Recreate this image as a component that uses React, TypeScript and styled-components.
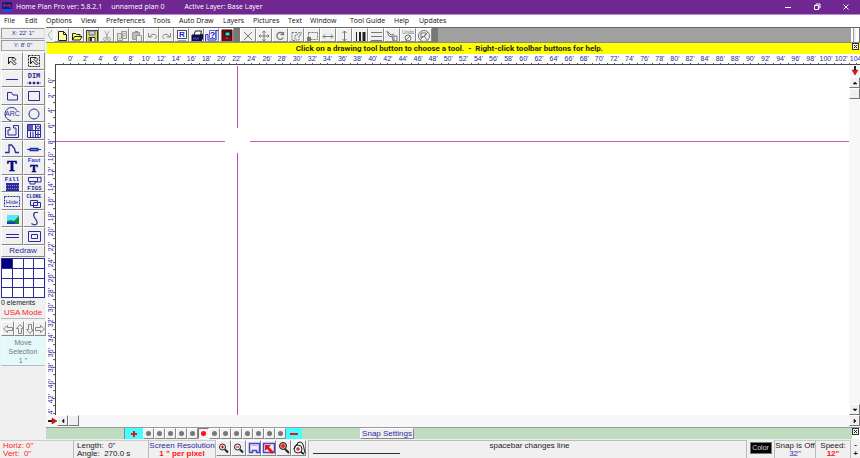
import React from "react";
import styled, { createGlobalStyle, css } from "styled-components";

const NAVY = "#2a2a9c";
const UI = `"Open Sans", "Noto Sans", sans-serif`;
const ARIAL = `"Liberation Sans", Arial, sans-serif`;

const GlobalStyle = createGlobalStyle`
  *, *::before, *::after { box-sizing: border-box; }
  html, body, #root { height: 100%; margin: 0; }
  body { font-family: ${ARIAL}; font-size: 8px; color: #222; background: #f0f0f0; overflow: hidden; }
  button { font: inherit; color: inherit; margin: 0; padding: 0; border: 0; background: none; }
  svg { display: block; flex: none; }
`;

const raised = css`
  background: #f0f0f0;
  border: 1px solid;
  border-color: #fff #888 #888 #fff;
`;

const sunken = css`
  border: 1px solid;
  border-color: #a4a4a4 #fff #fff #a4a4a4;
`;

const Window = styled.div`
  display: flex;
  flex-direction: column;
  height: 100vh;
`;

const TitleBar = styled.header`
  display: flex;
  align-items: center;
  height: 15px;
  flex: none;
  padding-left: 2px;
  background: #6f2791;
  border-bottom: 1px solid #b98bd0;
  color: #fff;
  font: 7px/12px ${UI};
`;

const TitleText = styled.span<{ $gap?: number }>`
  margin-left: ${(p) => p.$gap ?? 4}px;
  white-space: nowrap;
`;

const WindowControls = styled.div`
  display: flex;
  margin-left: auto;
`;

const WindowButton = styled.button`
  display: grid;
  place-items: center;
  width: 29px;
  height: 14px;
  color: #fff;
`;

const MenuBar = styled.nav`
  display: flex;
  align-items: center;
  height: 12px;
  flex: none;
  padding-left: 4px;
  background: #fff;
  color: #111;
  font: 7px/12px ${UI};
`;

const MenuItem = styled.button<{ $w: number }>`
  width: ${(p) => p.$w}px;
  text-align: left;
  white-space: nowrap;
`;

const Body = styled.div`
  display: flex;
  flex: 1;
  min-height: 0;
`;

const Sidebar = styled.aside`
  display: flex;
  flex-direction: column;
  width: 46px;
  flex: none;
  padding: 1px 1px 0;
`;

const Coordinate = styled.output`
  ${sunken}
  height: 11px;
  margin-bottom: 1px;
  color: ${NAVY};
  font-size: 6px;
  line-height: 9px;
  text-align: center;
  background: #eee;
  border-color: #999 #ddd #aaa #999;
`;

const ToolGrid = styled.div`
  display: grid;
  grid-template-columns: 1fr 1fr;
  grid-template-rows: repeat(11, 1fr);
  height: 193px;
  flex: none;
`;

const ToolButton = styled.button`
  ${raised}
  display: grid;
  place-items: center;
  min-height: 0;
  color: ${NAVY};
`;

const RedrawButton = styled.button`
  ${raised}
  height: 12px;
  flex: none;
  color: ${NAVY};
  font-size: 8px;
  line-height: 10px;
`;

const PatternGrid = styled.div`
  display: grid;
  grid-template-columns: repeat(4, 1fr);
  gap: 1px;
  height: 40px;
  flex: none;
  margin-top: 1px;
  padding: 1px;
  background: ${NAVY};
`;

const PatternCell = styled.button<{ $on: boolean }>`
  background: ${(p) => (p.$on ? "#00007c" : "#fff")};
`;

const ElementCount = styled.div`
  font-size: 7px;
  line-height: 10px;
  white-space: nowrap;
`;

const Mode = styled.button`
  height: 11px;
  color: #f22;
  line-height: 10px;
  border-bottom: 1px solid #bbb;
  white-space: nowrap;
`;

const MovePad = styled.div`
  display: grid;
  grid-template-columns: 13px 10px 10px 1fr;
  height: 15px;
  margin-top: 2px;
`;

const MoveButton = styled.button`
  ${raised}
  display: grid;
  place-items: center;
  color: #888;
`;

const MoveInfo = styled.div`
  height: 30px;
  padding-top: 2px;
  background: #e4fafa;
  border-bottom: 1px solid #bbb;
  color: #777;
  font-size: 7px;
  line-height: 9px;
  text-align: center;
`;

const Main = styled.main`
  display: flex;
  flex-direction: column;
  flex: 1;
  min-width: 0;
`;

const Toolbar = styled.div`
  display: flex;
  height: 16px;
  flex: none;
  background: #a0a0a0;
  border-top: 1px solid #666;
  border-bottom: 1px solid #888;
`;

const ToolbarGroup = styled.div`
  display: flex;
`;

const BarButton = styled.button<{ $wide?: boolean }>`
  ${raised}
  display: grid;
  place-items: center;
  width: ${(p) => (p.$wide ? 16 : 15)}px;
  overflow: hidden;
  color: #777;
`;

const BackButton = styled(BarButton)`
  width: 8px;
  border-color: #f0f0f0;
`;

const Divider = styled.div`
  width: 6px;
  background: #777;
`;

const BarEnd = styled.div`
  width: 9px;
  margin-left: auto;
  padding: 0 2px;
  background: #fff;
  border-right: 1px solid #777;

  &::before {
    content: "";
    display: block;
    width: 3px;
    height: 100%;
    border-left: 1px solid #999;
    background: #eee;
  }
`;

const HintBar = styled.div`
  display: flex;
  height: 11px;
  flex: none;
  background: #ff0;
  border-left: 1px solid #f0f0f0;
  color: #222;
`;

const HintText = styled.p`
  flex: 1;
  margin: 0;
  font-family: Roboto, ${ARIAL};
  font-weight: bold;
  line-height: 12px;
  text-align: center;
  white-space: pre;
`;

const CloseBox = styled.button`
  display: grid;
  place-items: center;
  width: 7px;
  height: 7px;
  margin-right: 1px;
  background: #f0f0f0;
  border: 1px solid #333;
`;

const TopRuler = styled.div`
  display: flex;
  height: 11px;
  flex: none;
  padding-left: 17px;
  overflow: hidden;
  background: linear-gradient(#444, #444) 9px 100% / 100% 1px no-repeat #fff;
`;

const TopScale = styled.div`
  display: flex;
  flex: 1;
  margin-right: -4px;
`;

const LeftRuler = styled.div`
  display: flex;
  flex-direction: column;
  width: 10px;
  flex: none;
  padding-top: 8px;
  overflow: hidden;
  background: #fff;
  border-right: 1px solid #444;
`;

const LeftScale = styled.div`
  display: flex;
  flex-direction: column;
  flex: 1;
  min-height: 0;
  margin-bottom: -6px;
`;

const tick = "linear-gradient(#555, #555)";

const TopMark = styled.span`
  display: flex;
  justify-content: center;
  flex: 1 1 0;
  width: 0;
  color: ${NAVY};
  font-size: 7px;
  line-height: 9px;
  white-space: nowrap;
  background: ${tick} 0 9px / 1px 2px no-repeat, ${tick} 50% 9px / 1px 2px no-repeat;
`;

const LeftMark = styled.span`
  display: flex;
  justify-content: center;
  flex: 1 1 0;
  min-height: 0;
  height: 0;
  color: ${NAVY};
  font-size: 7px;
  line-height: 9px;
  white-space: nowrap;
  writing-mode: vertical-rl;
  transform: rotate(180deg);
  background: ${tick} 0 0 / 2px 1px no-repeat, ${tick} 0 50% / 2px 1px no-repeat;
`;

const Workspace = styled.div`
  display: flex;
  flex: 1;
  min-height: 0;
`;

const Canvas = styled.div`
  position: relative;
  flex: 1;
  overflow: hidden;
  background: #fff;
`;

const HairH = styled.i<{ $from: number; $to?: number }>`
  position: absolute;
  top: 76px;
  left: ${(p) => p.$from}px;
  ${(p) => (p.$to === undefined ? "right: 0;" : `width: ${p.$to - p.$from}px;`)}
  height: 1px;
  background: #c85cc4;
`;

const HairV = styled.i<{ $from: number; $to?: number }>`
  position: absolute;
  left: 181px;
  top: ${(p) => p.$from}px;
  ${(p) => (p.$to === undefined ? "bottom: 0;" : `height: ${p.$to - p.$from}px;`)}
  width: 1px;
  background: #c04cc0;
`;

const VScroll = styled.div`
  display: flex;
  flex-direction: column;
  width: 11px;
  flex: none;
  background: #f7f7f7;
`;

const HScroll = styled.div`
  display: flex;
  height: 12px;
  flex: none;
  background: #f7f7f7;
`;

const ScrollButton = styled.button`
  ${raised}
  display: grid;
  place-items: center;
  width: 11px;
  height: 11px;
  flex: none;
  border-color: #fff #777 #777 #fff;
`;

const ScrollEnd = styled(ScrollButton)<{ $push?: boolean }>`
  margin: ${(p) => (p.$push ? "auto 0 0 0" : "0")};
`;

const ScrollSpace = styled.div`
  flex: 1;
`;

const RulerMarker = styled.div`
  display: grid;
  place-items: center;
  width: 11px;
  height: 12px;
  flex: none;
`;

const LayerBar = styled.div`
  display: flex;
  height: 12px;
  flex: none;
  background: #c0dcc0;
  border-top: 1px solid #999;
`;

const LayerStep = styled.button<{ $w: number }>`
  display: grid;
  place-items: center;
  width: ${(p) => p.$w}px;
  background: #4ff;
`;

const LayerStart = styled.div`
  width: 79px;
  border-right: 1px solid #888;
`;

const LayerDot = styled.button<{ $on: boolean }>`
  ${raised}
  display: grid;
  place-items: center;
  width: 11px;
  ${(p) => p.$on && "border-color: #777 #fff #fff #777;"}

  &::before {
    content: "";
    width: 5px;
    height: 5px;
    border-radius: 50%;
    background: ${(p) => (p.$on ? "#f11" : "#777")};
  }
`;

const SnapSettings = styled.button`
  ${raised}
  width: 54px;
  margin-left: 58px;
  color: ${NAVY};
  line-height: 9px;
  white-space: nowrap;
`;

const LayerEnd = styled.div`
  width: 8px;
  margin-left: auto;
  background: #fff;
`;

const StatusBar = styled.footer`
  display: flex;
  height: 19px;
  flex: none;
  padding-top: 1px;
  background: #f0f0f0;
  line-height: 8px;
  white-space: pre;
`;

const StatusCell = styled.div<{ $w: number; $color?: string; $center?: boolean; $pad?: number }>`
  width: ${(p) => p.$w}px;
  padding: 1px 0 0 ${(p) => p.$pad ?? 0}px;
  color: ${(p) => p.$color ?? "#222"};
  text-align: ${(p) => (p.$center ? "center" : "left")};
  border-right: 1px solid #bbb;
  border-top: 1px solid #ccc;
  overflow: hidden;
`;

const Line = styled.div<{ $color?: string; $bold?: boolean }>`
  color: ${(p) => p.$color ?? "inherit"};
  font-weight: ${(p) => (p.$bold ? "bold" : "normal")};
`;

const ZoomButton = styled.button`
  ${raised}
  display: grid;
  place-items: center;
  width: 15px;
  height: 16px;
`;

const LineSample = styled.div`
  display: grid;
  align-content: start;
  flex: 1;
  margin-left: 2px;
  padding: 1px 0 0 4px;
  border: solid #bbb;
  border-width: 1px 1px 0 1px;
  text-align: center;

  &::after {
    content: "";
    width: 87px;
    height: 1px;
    margin-top: 3px;
    background: #333;
  }
`;

const ColorCell = styled.div`
  display: grid;
  align-content: start;
  justify-content: center;
  width: 28px;
  padding-top: 2px;
  border-right: 1px solid #bbb;
`;

const ColorButton = styled.button`
  width: 22px;
  height: 12px;
  background: #000;
  border: 1px solid #777;
  color: #ddd;
  font-size: 7px;
`;

const SpeedSteps = styled.div`
  display: flex;
  flex-direction: column;
  width: 9px;
`;

const StepButton = styled.button`
  height: 9px;
  font-weight: bold;
`;

type IconProps = { w?: number; h?: number; sw?: number; children: React.ReactNode };

const Svg = ({ w = 14, h = 14, sw = 1, children }: IconProps) => (
  <svg width={w} height={h} viewBox={`0 0 ${w} ${h}`} fill="none" stroke="currentColor" strokeWidth={sw} aria-hidden>
    {children}
  </svg>
);

const Side = ({ children }: { children: React.ReactNode }) => (
  <Svg w={20} h={16}>{children}</Svg>
);

const glyph = { fill: "currentColor", stroke: "none", textAnchor: "middle" as const };
const pixelFont = `"Liberation Mono", monospace`;

const cursor = (
  <path d="M6.5 11V4.500h5.500l-2 2 4 4-1.500 1.500-4-4zM12 4.500l2 2-1.500 1" stroke="#222" />
);

const sideTools: [string, React.ReactNode][] = [
  ["Select", <Side>{cursor}</Side>],
  ["Select area", <Side>{cursor}<path d="M4.500 2.500h11v11h-11z" stroke="#222" strokeDasharray="2 1" /></Side>],
  ["Line", <Side><path d="M4 8.500h12" /></Side>],
  ["Dimension", <Side><text x="10" y="7" fontSize="7" fontWeight="bold" fontFamily={pixelFont} {...glyph}>DIM</text><path d="M3 12h14" strokeWidth=".6" /><path d="M5 12h2M9 12h2M13 12h2" strokeWidth="2.500" /></Side>],
  ["Polygon", <Side><path d="M5.500 4.500h4l1.500 2.500h4.500v5h-10z" /></Side>],
  ["Rectangle", <Side><path d="M4.500 3.500h11v9h-11z" /></Side>],
  ["Arc", <Side><path d="M15 4.500A6.500 6.500 0 1 0 9 14.500" /><text x="10.500" y="10" fontSize="7" fontFamily={ARIAL} {...glyph}>ARC</text></Side>],
  ["Circle", <Side><circle cx="10" cy="8" r="5" /></Side>],
  ["Walls", <Side><path d="M3.500 4.500v10h13v-12h-5v2.500h2.500v7h-8v-5h2v-2.500z" /></Side>],
  ["Windows and doors", <Side><path d="M3.500 1.500h13v13h-13zM3.500 7.500h13M11.500 1.500v13M6.500 8.500v6M9 8.500v6M14 8.500v6M12 11.500h5" /><path d="M4 2h5v5h-5z" fill="currentColor" fillOpacity=".75" stroke="none" /><circle cx="14" cy="4.500" r="1.500" /></Side>],
  ["Curve", <Side><path d="M3 11.500h4v-7.500h2.500l3 3.500 1 4h3.500" strokeWidth="1.300" /></Side>],
  ["Beam", <Side><path d="M3 8.500h14" /><path d="M5.500 8.500h9" strokeWidth="3.500" /><path d="M7 8.500h6" stroke="#1d9fd0" /></Side>],
  ["Text", <Side><text x="10" y="13" fontSize="14" fontWeight="bold" fontFamily={`"Liberation Serif", serif`} {...glyph} fill="#000080" stroke="#000080" strokeWidth=".6">T</text></Side>],
  ["Fast text", <Side><text x="10" y="4" fontSize="6" fontWeight="bold" fontFamily={ARIAL} {...glyph} fill="#3838e0">Fast</text><text x="10" y="14" fontSize="11" fontWeight="bold" fontFamily={`"Liberation Serif", serif`} {...glyph} fill="#000080" stroke="#000080" strokeWidth=".6">T</text></Side>],
  ["Fill", <Side><text x="10" y="5" fontSize="6" fontWeight="bold" fontFamily={pixelFont} {...glyph}>Fill</text><path d="M4 7h13v8h-13z" fill="currentColor" stroke="none" /><path d="M4 9.500h13M4 12.500h13" stroke="#8d8dde" strokeDasharray="1 1" /></Side>],
  ["Figures", <Side><path d="M4.500 1.500h9v4h-9zM13.500 2l3.500-1v5h-6v2h-5v-2" /><text x="10.500" y="14" fontSize="6" fontWeight="bold" fontFamily={pixelFont} {...glyph}>FIGS</text></Side>],
  ["Hide", <Side><path d="M2.500 3.500h15v10h-15z" strokeDasharray="2 1" /><text x="10" y="11" fontSize="6" fontFamily={ARIAL} {...glyph}>Hide</text></Side>],
  ["Clone", <Side><text x="10" y="5" fontSize="5" fontWeight="bold" fontFamily={pixelFont} {...glyph}>CLONE</text><path d="M6.500 7.500h7v5h-7zM9.500 9.500h7v5h-7z" /></Side>],
  ["Picture", <Side><path d="M5 4h12v9h-12z" fill="#55e8ff" stroke="none" /><path d="M5 10l4-1 3 1 5-5v8h-12z" fill="#16872e" stroke="none" /><path d="M5 11h8v2h-8z" fill="#1a38c8" stroke="none" /></Side>],
  ["Freehand", <Side><path d="M14 1.500h-3q-2 1-1 4l2.500 4q1.500 3-.5 4t-4.500-1" strokeWidth="1.200" /></Side>],
  ["Double line", <Side><path d="M4 6.500h13M4 9.500h13" /></Side>],
  ["Double rectangle", <Side><path d="M4.500 3.500h12v10h-12zM7.500 6.500h6v4h-6z" /></Side>],
];

const fileTools: [string, React.ReactNode][] = [
  ["New", <Svg><path d="M3.500 2.500h5l3 3v6h-8z" fill="#ffffa0" stroke="#222" /><path d="M8.500 2.500v3h3" stroke="#222" /></Svg>],
  ["Open", <Svg><path d="M2.500 11V4.500h3l1 1h3.500v2M2.500 11l2-3.500h7.500l-2 3.500z" fill="#ff6" stroke="#222" /></Svg>],
  ["Save", <Svg><path d="M1.500 1.500h11v11h-11z" fill="#e6e030" stroke="#333" /><path d="M4 2h6v4h-6z" fill="#c8d0e8" stroke="#668" /><path d="M4 8.500h6v4h-6z" fill="#fff" stroke="#335" /><path d="M5 9h2v3h-2z" fill="#224" stroke="none" /></Svg>],
  ["Cut", <Svg><path d="M5 2l3 7M9 2L6 9" stroke="#aaa" /><circle cx="5" cy="10" r="1.500" stroke="#aaa" /><circle cx="9" cy="10" r="1.500" stroke="#aaa" /></Svg>],
  ["Copy", <Svg><path d="M2.500 4.500h5v7h-5zM6.500 2.500h5v7h-5z" fill="#e4e4cc" stroke="#999" /><path d="M7.500 4.500h3M7.500 6.500h3M4 9.500h2" stroke="#aaa" /></Svg>],
  ["Paste", <Svg><path d="M2.500 3.500h7v7h-7z" fill="#bbb" stroke="#999" /><path d="M6.500 6.500h5v6h-5z" fill="#eee" stroke="#999" /><path d="M5 2.500h3" stroke="#888" /></Svg>],
  ["Undo", <Svg><path d="M3.500 4v4h4M4 8q3-4 6-2.500t0 4.500" stroke="#888" /></Svg>],
  ["Redo", <Svg><path d="M10.500 4v4h-4M10 8q-3-4-6-2.500t0 4.500" stroke="#888" /></Svg>],
  ["Redraw view", <Svg><path d="M2.500 1.500h9v8h-9z" fill="#fff" stroke="#446" /><text x="7" y="8" fontSize="8" fontWeight="bold" fontFamily={ARIAL} {...glyph} fill="#22c">R</text><path d="M3 12h8" stroke="#557" /></Svg>],
  ["Print", <Svg><path d="M4 6l1.500-4h6l-1 4" fill="#fff" stroke="#222" /><path d="M2 6h9l2-1v4l-2 3h-9z" fill="#113" stroke="#113" /><path d="M3 9.500h6" stroke="#33e" strokeWidth="2" /></Svg>],
  ["Help", <Svg><path d="M.5 5.500h2.500v5.500h8v-9.500h2.500v12h-13z" fill="#d8dcff" stroke="#33c" /><path d="M4.500 1.500h6v8h-6z" fill="#fff" stroke="#66c" /><text x="7.500" y="9" fontSize="9" fontWeight="bold" fontFamily={ARIAL} {...glyph} fill="#22c">?</text></Svg>],
  ["Exit", <Svg><path d="M2 1h10v12h-10z" fill="#7d0c12" stroke="#400" /><path d="M5 3h5v4h-5z" fill="#2dd" stroke="#111" /><path d="M6 9h2" stroke="#f44" /></Svg>],
];

const editTools: [string, React.ReactNode][] = [
  ["Delete", <Svg><path d="M3 3l8 8M11 3l-8 8" /></Svg>],
  ["Move", <Svg><path d="M7 2v10M2 7h10M5.500 3.500L7 2l1.500 1.500M5.500 10.500L7 12l1.500-1.500M3.500 5.500L2 7l1.500 1.500M10.500 5.500L12 7l-1.500 1.500" /></Svg>],
  ["Rotate", <Svg><path d="M10 4.500a3.500 3.500 0 1 0 .5 4M10.500 3v2.500h-3" strokeWidth="1.300" /></Svg>],
  ["Flip", <Svg><path d="M3 3.500h5v3h-2v5h-3zM9 4l3-1v3h-2v5h-3" strokeDasharray="2 1" /></Svg>],
  ["Resize", <Svg><path d="M3.500 3.500h9v7h-9z" strokeDasharray="2 1" /><path d="M2 8h4v4h-4z" fill="currentColor" stroke="none" /></Svg>],
  ["Stretch horizontally", <Svg><path d="M2 7.500h10M4 5.500l-2 2 2 2M10 5.500l2 2-2 2" /></Svg>],
  ["Stretch vertically", <Svg><path d="M7.500 2v10M5.500 4l2-2 2 2M5.500 10l2 2 2-2" /></Svg>],
  ["Line width", <Svg><path d="M3.500 3v9" stroke="#222" /><path d="M7 3v9" stroke="#222" strokeWidth="2" /><path d="M11 3v9" stroke="#222" strokeWidth="3" /></Svg>],
  ["Line style", <Svg><path d="M2 3.500h11M2 7.500h11M2 11.500h11" /></Svg>],
  ["Paint", <Svg><path d="M2 2l4 4 3-1M2 2l2 5 3 1M7 7h5v5h-4zM9 7v5" /></Svg>],
  ["Undo last", <Svg><text x="7" y="5" fontSize="5" fontFamily={ARIAL} {...glyph}>Undo</text><circle cx="7" cy="9" r="3" /><path d="M5 11l4-4" /></Svg>],
  ["No snap", <Svg><circle cx="7" cy="7" r="5.500" /><path d="M3 11l8-8M4 4h5v2l-2 1 3 4M4 4v5l2-2" /></Svg>],
];

const lens = <><circle cx="5.500" cy="6" r="3" stroke="#222" /><path d="M8 8.500l3 3" stroke="#222" strokeWidth="2" /></>;

const zoomTools: [string, React.ReactNode][] = [
  ["Zoom in", <Svg>{lens}<path d="M4 6h3M5.500 4.500v3" stroke="#d00" /></Svg>],
  ["Zoom out", <Svg>{lens}<path d="M4 6h3" stroke="#d00" /></Svg>],
  ["Fit page", <Svg><path d="M2.500 2.500h10v9h-3v-2h-4v2h-3z" stroke="#44c" strokeWidth="1.500" /><path d="M4.500 4.500h6" stroke="#aaf" /></Svg>],
  ["Zoom to corner", <Svg><path d="M1.500 2.500h11v9h-11z" stroke="#44c" strokeWidth="1.500" /><path d="M3 4h6l-2 2 5 5-2 2-5-5-2 2z" fill="#e11" stroke="none" /></Svg>],
  ["Zoom window", <Svg><circle cx="6" cy="5" r="3.500" fill="#e88" stroke="#222" /><path d="M8 8l4 4" stroke="#222" strokeWidth="2" /><path d="M4 5h4M6 3v4" stroke="#c00" /></Svg>],
  ["Zoom previous", <Svg><path d="M5 4q0-3 3-3t3.500 4L13 12M2 8l3-5" stroke="#222" /><circle cx="6" cy="8" r="4" stroke="#222" /><path d="M4 8h4M6 6v4" stroke="#c00" /><path d="M9 11l3 2" stroke="#222" strokeWidth="2" /></Svg>],
];

const menus: [string, number][] = [
  ["File", 21], ["Edit", 21], ["Options", 35], ["View", 25], ["Preferences", 47], ["Tools", 26],
  ["Auto Draw", 44], ["Layers", 30], ["Pictures", 35], ["Text", 22], ["Window", 40],
  ["Tool Guide", 44], ["Help", 25], ["Updates", 35],
];

const arrows: Record<string, string> = {
  up: "M1 4l2-2 2 2z",
  down: "M1 2l2 2 2-2z",
  left: "M4 1l-2 2 2 2z",
  right: "M2 1l2 2-2 2z",
};

const Arrow = ({ dir }: { dir: string }) => (
  <Svg w={6} h={6}><path d={arrows[dir]} fill="#111" stroke="#111" strokeWidth=".5" /></Svg>
);

const moves: [string, number][] = [["left", 0], ["up", 90], ["down", 270], ["right", 180]];

const feet = (count: number) => Array.from({ length: count }, (_, i) => `${i * 2}'`);

const Cross = () => <Svg w={5} h={5}><path d="M1 1l3 3M4 1l-3 3" stroke="#222" /></Svg>;

export default function App() {
  return (
    <Window>
      <GlobalStyle />
      <TitleBar>
        <Svg w={10} h={12}>
          <path d="M0 1h10v8h-10z" fill="#102080" stroke="none" />
          <path d="M2 6V3l2 2 4-1v3" stroke="#e23" />
          <path d="M0 8h10v3h-10z" fill="#2448d8" stroke="none" />
        </Svg>
        <TitleText>Home Plan Pro ver: 5.8.2.1</TitleText>
        <TitleText $gap={9}>unnamed plan 0</TitleText>
        <TitleText $gap={20}>Active Layer: Base Layer</TitleText>
        <WindowControls>
          <WindowButton aria-label="Minimize"><Svg w={8} h={8}><path d="M1 4.500h6" /></Svg></WindowButton>
          <WindowButton aria-label="Restore"><Svg w={8} h={8}><path d="M1.500 2.500h4v4h-4zM3 2.500v-1.500h4v4h-1.500" /></Svg></WindowButton>
          <WindowButton aria-label="Close"><Svg w={8} h={8}><path d="M1.500 1.500l5 5M6.500 1.500l-5 5" /></Svg></WindowButton>
        </WindowControls>
      </TitleBar>
      <MenuBar>
        {menus.map(([name, w]) => <MenuItem key={name} $w={w}>{name}</MenuItem>)}
      </MenuBar>
      <Body>
        <Sidebar>
          <Coordinate>X: 22' 1"</Coordinate>
          <Coordinate>Y: 8' 0"</Coordinate>
          <ToolGrid>
            {sideTools.map(([name, icon]) => <ToolButton key={name} aria-label={name}>{icon}</ToolButton>)}
          </ToolGrid>
          <RedrawButton>Redraw</RedrawButton>
          <PatternGrid>
            {Array.from({ length: 16 }, (_, i) => <PatternCell key={i} $on={i === 0} aria-label={`Pattern ${i + 1}`} />)}
          </PatternGrid>
          <ElementCount>0 elements</ElementCount>
          <Mode>USA Mode</Mode>
          <MovePad>
            {moves.map(([name, turn]) => (
              <MoveButton key={name} aria-label={`Move ${name}`}>
                <Svg w={10} h={10}><path transform={`rotate(${turn} 5 5)`} d="M.5 5l4-3.500v2h5v3h-5v2z" /></Svg>
              </MoveButton>
            ))}
          </MovePad>
          <MoveInfo>Move<br />Selection<br />1 "</MoveInfo>
        </Sidebar>
        <Main>
          <Toolbar>
            <BackButton aria-label="Back"><Svg w={6} h={12}><path d="M5 1l-4 5 4 5" stroke="#aaa" /></Svg></BackButton>
            <ToolbarGroup>
              {fileTools.map(([name, icon]) => <BarButton key={name} aria-label={name}>{icon}</BarButton>)}
            </ToolbarGroup>
            <Divider />
            <ToolbarGroup>
              {editTools.map(([name, icon]) => <BarButton key={name} $wide aria-label={name}>{icon}</BarButton>)}
            </ToolbarGroup>
            <Divider />
            <BarEnd />
          </Toolbar>
          <HintBar>
            <HintText>{"Click on a drawing tool button to choose a tool.  -  Right-click toolbar buttons for help."}</HintText>
            <CloseBox aria-label="Close hint"><Cross /></CloseBox>
          </HintBar>
          <TopRuler>
            <TopScale>{feet(53).map((f) => <TopMark key={f}>{f}</TopMark>)}</TopScale>
          </TopRuler>
          <Workspace>
            <LeftRuler>
              <LeftScale>{feet(23).map((f) => <LeftMark key={f}>{f}</LeftMark>)}</LeftScale>
            </LeftRuler>
            <Canvas>
              <HairH $from={0} $to={169} />
              <HairH $from={194} />
              <HairV $from={1} $to={63} />
              <HairV $from={88} />
            </Canvas>
            <VScroll>
              <RulerMarker><Svg w={8} h={10}><path d="M4 0v5" stroke="#222" strokeWidth="2" /><path d="M1 4h6l-3 5z" fill="#e11" stroke="#611" strokeWidth=".5" /></Svg></RulerMarker>
              <ScrollButton aria-label="Scroll up"><Arrow dir="up" /></ScrollButton>
              <ScrollButton aria-label="Vertical position" />
              <ScrollEnd $push aria-label="Scroll down"><Arrow dir="down" /></ScrollEnd>
            </VScroll>
          </Workspace>
          <HScroll>
            <RulerMarker><Svg w={10} h={8}><path d="M1 4h5" stroke="#411" strokeWidth="2" /><path d="M5 1v6l5-3z" fill="#e11" stroke="#611" strokeWidth=".5" /></Svg></RulerMarker>
            <ScrollButton aria-label="Scroll left"><Arrow dir="left" /></ScrollButton>
            <ScrollButton aria-label="Horizontal position" />
            <ScrollSpace />
            <ScrollEnd aria-label="Scroll right"><Arrow dir="right" /></ScrollEnd>
          </HScroll>
          <LayerBar>
            <LayerStart />
            <LayerStep $w={18} aria-label="Add layer"><Svg w={8} h={8}><path d="M1 4h6M4 1v6" stroke="#e11" strokeWidth="2" /></Svg></LayerStep>
            {Array.from({ length: 13 }, (_, i) => <LayerDot key={i} $on={i === 5} aria-label={`Layer ${i + 1}`} />)}
            <LayerStep $w={16} aria-label="Remove layer"><Svg w={8} h={8}><path d="M0 4h8" stroke="#e11" strokeWidth="2" /></Svg></LayerStep>
            <SnapSettings>Snap Settings</SnapSettings>
            <LayerEnd><CloseBox aria-label="Close layer bar"><Cross /></CloseBox></LayerEnd>
          </LayerBar>
        </Main>
      </Body>
      <StatusBar>
        <StatusCell $w={74} $pad={3} $color="#f22"><Line>Horiz: 0"</Line><Line>Vert:  0"</Line></StatusCell>
        <StatusCell $w={75} $pad={3}><Line>Length:  0"</Line><Line>Angle:  270.0 s</Line></StatusCell>
        <StatusCell $w={67} $center><Line $color={NAVY}>Screen Resolution</Line><Line $bold $color="#f11">1 " per pixel</Line></StatusCell>
        {zoomTools.map(([name, icon]) => <ZoomButton key={name} aria-label={name}>{icon}</ZoomButton>)}
        <LineSample>spacebar changes line</LineSample>
        <ColorCell><ColorButton>Color</ColorButton></ColorCell>
        <StatusCell $w={41} $center><Line>Snap is Off</Line><Line $color={NAVY}>32"</Line></StatusCell>
        <StatusCell $w={35} $center><Line>Speed:</Line><Line $bold $color="#f11">12"</Line></StatusCell>
        <SpeedSteps><StepButton aria-label="Slower">-</StepButton><StepButton aria-label="Faster">+</StepButton></SpeedSteps>
      </StatusBar>
    </Window>
  );
}
